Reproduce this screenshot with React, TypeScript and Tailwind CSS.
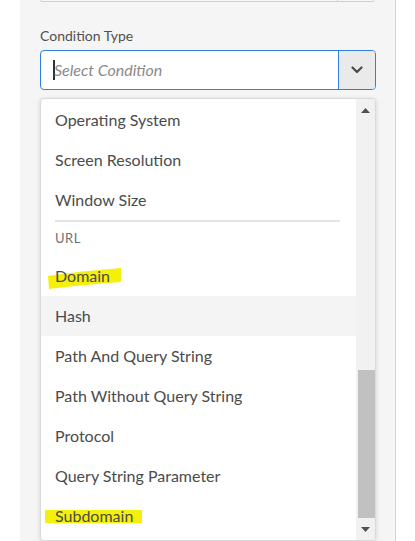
import React from 'react';

const font = { fontFamily: 'Lato, "Noto Sans", sans-serif' };

const ChevronDown: React.FC = () => (
  <svg width="12" height="8" viewBox="0 0 12 8" fill="none">
    <path d="M1.5 1.5 L6 6 L10.5 1.5" stroke="#4b4b4b" strokeWidth="2.2" strokeLinecap="round" strokeLinejoin="round" />
  </svg>
);

const Item: React.FC<{ label: string; hover?: boolean; mark?: 'slant' | 'box' }> = ({ label, hover, mark }) => (
  <div className={`relative h-[40px] flex items-center pl-[14px] text-[16px] text-[#4b4b4b] ${hover ? 'bg-[#f4f4f4]' : ''}`}>
    {mark === 'slant' && (
      <svg className="absolute left-0 top-0" width="90" height="40" viewBox="0 0 90 40">
        <path d="M7 20 Q40 15 80 12 L80 26 Q40 29 8 33 Z" fill="#f5ef0c" />
      </svg>
    )}
    {mark === 'box' && <div className="absolute left-[4px] top-[14px] w-[97px] h-[13px] bg-[#f5ef0c]" />}
    <span className="relative">{label}</span>
  </div>
);

const App: React.FC = () => {
  const group1 = ['Operating System', 'Screen Resolution', 'Window Size'];
  const group2 = ['Hash', 'Path And Query String', 'Path Without Query String', 'Protocol', 'Query String Parameter'];

  return (
    <div className="w-[415px] h-[541px] bg-white flex overflow-hidden" style={font}>
      <div className="w-[20px] shrink-0 bg-white" />
      <div className="w-[376px] shrink-0 bg-[#f5f5f5] border-r border-[#d3d3d3] pl-[20px] pr-[20px] flex flex-col">
        {/* bottom edge of previous field */}
        <div className="h-[2px] w-[334px] flex border-b border-x border-[#cfcfcf] rounded-b bg-[#f7f7f7]">
          <div className="w-[297px] border-r border-[#cfcfcf]" />
        </div>

        <div className="mt-[25px] text-[14px] leading-[18px] text-[#505050]">Condition Type</div>

        <div className="mt-[5px] h-[40px] w-[336px] flex border border-[#2d7fe0] rounded-[4px] bg-white overflow-hidden">
          <div className="flex-1 flex items-center pl-[12px]">
            <div className="w-[2px] h-[20px] bg-[#333]" />
            <span className="italic text-[16px] text-[#8a8a8a] -ml-[1px]">Select Condition</span>
          </div>
          <div className="w-[37px] border-l border-[#2d7fe0] bg-[#eaeaea] flex items-center justify-center">
            <ChevronDown />
          </div>
        </div>

        <div className="mt-[8px] w-[336px] h-[443px] bg-white border border-[#dadada] rounded-[4px] shadow-[0_1px_4px_rgba(0,0,0,0.15)] flex overflow-hidden">
          <div className="flex-1 pt-[1px]">
            {group1.map(l => <Item key={l} label={l} />)}
            <div className="h-[2px] bg-[#e3e3e3] ml-[14px] mr-[16px]" />
            <div className="h-[34px] flex items-center pl-[14px] text-[13px] tracking-[0.5px] text-[#707070]">URL</div>
            <Item label="Domain" mark="slant" />
            {group2.map(l => <Item key={l} label={l} hover={l === 'Hash'} />)}
            <Item label="Subdomain" mark="box" />
          </div>
          <div className="w-[19px] bg-[#f1f1f1] flex flex-col items-center">
            <div className="h-[22px] flex items-center justify-center">
              <svg width="9" height="5" viewBox="0 0 9 5"><path d="M4.5 0 L9 5 L0 5 Z" fill="#505050" /></svg>
            </div>
            <div className="flex-1 w-full flex flex-col">
              <div className="h-[249px]" />
              <div className="ml-[2px] w-[17px] h-[148px] bg-[#c1c1c1]" />
            </div>
            <div className="h-[22px] flex items-center justify-center">
              <svg width="9" height="5" viewBox="0 0 9 5"><path d="M0 0 L9 0 L4.5 5 Z" fill="#505050" /></svg>
            </div>
          </div>
        </div>
      </div>
      <div className="flex-1 bg-white" />
    </div>
  );
};

export default App;
